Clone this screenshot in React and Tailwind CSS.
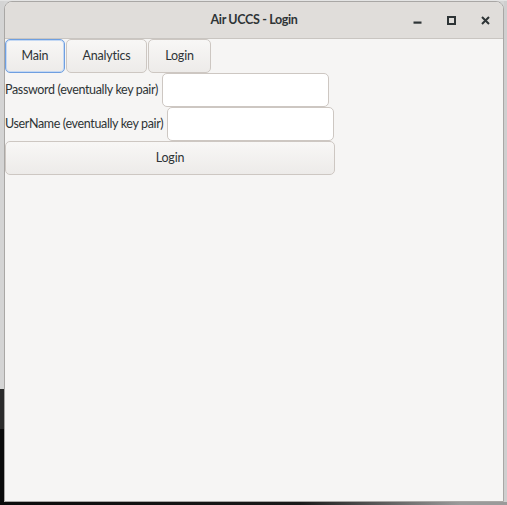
import React from "react";

function Tab({ label, width, focused }) {
	return (
		<button
			className={`h-[34px] ${width} rounded-[5px] border bg-[linear-gradient(#f8f7f6,#edebe9)] text-[12.5px] tracking-[-0.2px] text-[#2e3436] ${
				focused ? "border-[#6f9fe0] shadow-[inset_0_0_0_1px_#c4d8f3]" : "border-[#cdc7c2]"
			}`}
		>
			{label}
		</button>
	);
}

function Field({ label, labelWidth }) {
	return (
		<div className="flex h-[34px] items-center">
			<span className={`${labelWidth} whitespace-nowrap text-[12.5px] tracking-[-0.35px] text-[#2e3436]`}>{label}</span>
			<input className="h-[34px] w-[167px] rounded-[5px] border border-[#cdc7c2] bg-white outline-none" />
		</div>
	);
}

export default function App() {
	return (
		<div className="flex h-[505px] w-[507px] flex-col bg-[#d6d6d6] font-['Lato','Noto_Sans',sans-serif]">
			<div className="h-[1px] bg-[#e4e4e4]"></div>
			<div className="flex h-[501px]">
				{/* desktop peeking out on the left */}
				<div className="w-[4px] bg-[linear-gradient(#d4d4d4_0,#d4d4d4_388px,#2b2b2b_388px,#2b2b2b_428px,#0b0b0b_428px)]"></div>

				{/* the window */}
				<div className="flex w-[500px] flex-col overflow-hidden rounded-t-[8px] border border-[#a9a7a5] bg-[#f6f5f4]">
					<div className="relative flex h-[37px] items-center justify-center border-b border-[#c9c5c1] bg-[#e0ddda]">
						<span className="text-[12.5px] font-bold tracking-[-0.35px] text-[#2e3436]">Air UCCS - Login</span>
						<div className="absolute right-[13px] top-0 flex h-full items-center gap-[25px] text-[#2e3436]">
							<svg width="9" height="9" viewBox="0 0 9 9">
								<rect x="0.5" y="5.5" width="8" height="2.2" fill="currentColor" />
							</svg>
							<svg width="9" height="9" viewBox="0 0 9 9">
								<rect x="1" y="1" width="7" height="7" fill="none" stroke="currentColor" strokeWidth="2" />
							</svg>
							<svg width="9" height="9" viewBox="0 0 9 9">
								<path d="M1 1 L8 8 M8 1 L1 8" stroke="currentColor" strokeWidth="2" />
							</svg>
						</div>
					</div>

					<div className="flex flex-col pr-[4px]">
						<div className="flex h-[34px] gap-[1px]">
							<Tab label="Main" width="w-[60px]" focused />
							<Tab label="Analytics" width="w-[81px]" />
							<Tab label="Login" width="w-[63px]" />
						</div>
						<Field label="Password (eventually key pair)" labelWidth="w-[157px]" />
						<Field label="UserName (eventually key pair)" labelWidth="w-[162px]" />
						<button className="h-[34px] w-[330px] rounded-[5px] border border-[#cdc7c2] bg-[linear-gradient(#f8f7f6,#edebe9)] text-[12.5px] tracking-[-0.2px] text-[#2e3436]">
							Login
						</button>
					</div>
				</div>

				<div className="w-[3px] bg-[#cfcfcf]"></div>
			</div>
			<div className="h-[3px] bg-[linear-gradient(90deg,#0b0b0b_0,#1a1a1a_300px,#9a9a9a_460px)]"></div>
		</div>
	);
}
